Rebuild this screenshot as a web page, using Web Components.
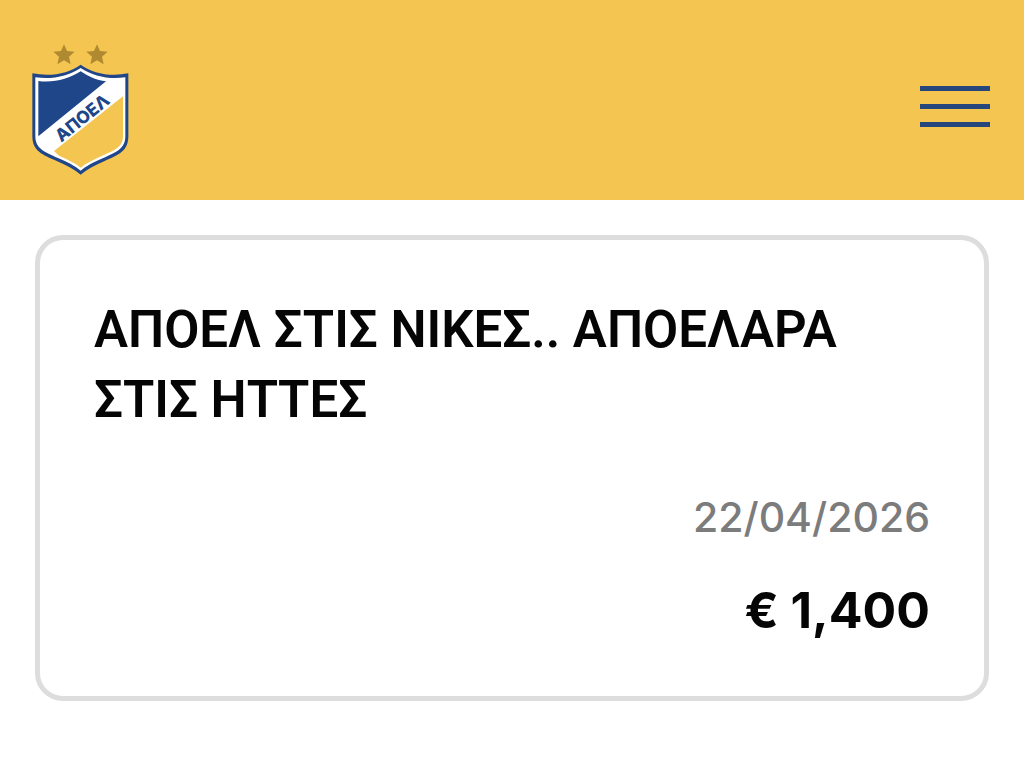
<!DOCTYPE html>
<html lang="el">
<head>
<meta charset="utf-8">
<meta name="viewport" content="width=device-width, initial-scale=1">
<title>ΑΠΟΕΛ</title>
<style>
    body {
        margin: 0;
        background: #fff;
        color: #050505;
        font-family: Inter, "Noto Sans", sans-serif;
    }
</style>
</head>
<body>
<site-header>
    <club-crest></club-crest>
    <menu-button slot="actions"></menu-button>
</site-header>
<main>
    <donation-card>
        <span slot="title">ΑΠΟΕΛ ΣΤΙΣ ΝΙΚΕΣ.. ΑΠΟΕΛΑΡΑ ΣΤΙΣ ΗΤΤΕΣ</span>
        <time slot="date" datetime="2026-04-22">22/04/2026</time>
        <span slot="amount">€ 1,400</span>
    </donation-card>
</main>

<script>
const define = (name, html) => {
    const template = document.createElement('template');
    template.innerHTML = html;

    window.customElements.define(name, class extends HTMLElement {
        constructor() {
            super();
            this.attachShadow({ mode: "open" });
            this.shadowRoot.appendChild(template.content.cloneNode(true));
        }
    });
};

define('site-header', `
<style>
    :host {
        display: block;
        background: #f4c551;
    }

    header {
        display: flex;
        align-items: center;
        justify-content: space-between;
        box-sizing: border-box;
        min-height: 200px;
        padding: 12px 34px 0 32px;
    }
</style>
<header>
    <slot></slot>
    <slot name="actions"></slot>
</header>`);

define('club-crest', `
<style>
    :host {
        display: block;
    }

    a, svg {
        display: block;
    }

    svg {
        margin-top: 6px;
    }

    text {
        font: 800 52px Inter, "Noto Sans", sans-serif;
        fill: #20468a;
    }
</style>
<a href="#" aria-label="ΑΠΟΕΛ">
    <svg width="97" height="131" viewBox="36 25 291 393">
        <g fill="#b08a30">
            <path d="M132 26l9 20 23 2-17 15 5 23-20-12-20 12 5-23-17-15 23-2z"/>
            <path d="M231 26l9 20 23 2-17 15 5 23-20-12-20 12 5-23-17-15 23-2z"/>
        </g>
        <path fill="#20468a" d="M182 87C146 113 94 124 37 113V302C37 346 68 358 110 376C140 389 164 401 182 417C200 401 224 389 254 376C296 358 325 346 325 302V113C270 124 218 113 182 87z"/>
        <path fill="#fff" d="M182 97C145 122 96 132 46 125V302C46 339 74 350 114 367C142 379 166 391 182 405C198 391 222 379 250 367C290 350 316 339 316 302V125C268 132 219 122 182 97z"/>
        <path fill="#20468a" d="M182 107C146 130 101 142 55 136V302L258 137C229 134 204 122 182 107z"/>
        <path fill="#f4c551" d="M309 182V302C309 334 286 343 247 360C219 372 197 383 182 396C167 383 145 372 117 360L102 346z"/>
        <text x="124" y="321" transform="rotate(-39 124 321)">ΑΠΟΕΛ</text>
    </svg>
</a>`);

define('menu-button', `
<style>
    :host {
        display: block;
    }

    button {
        display: flex;
        flex-direction: column;
        gap: 13px;
        width: 70px;
        padding: 0;
        border: none;
        background: none;
        cursor: pointer;
    }

    span {
        height: 5px;
        width: 100%;
        background: #26477c;
    }
</style>
<button type="button" aria-label="Menu">
    <span></span>
    <span></span>
    <span></span>
</button>`);

define('donation-card', `
<style>
    :host {
        display: block;
        margin: 35px;
        padding: 55px 54px 52px;
        border: 5px solid #ddd;
        border-radius: 28px;
    }

    h2 {
        margin: 0;
        font-family: Roboto, "Noto Sans", sans-serif;
        font-size: 51px;
        font-weight: 600;
        line-height: 70px;
    }

    p {
        margin: 0;
        text-align: right;
    }

    .date {
        margin-top: 53px;
        color: #7c7c7c;
        font-size: 41px;
        font-weight: 500;
        line-height: 58px;
    }

    .amount {
        margin-top: 30px;
        font-size: 50px;
        font-weight: 700;
        line-height: 68px;
    }
</style>
<h2><slot name="title"></slot></h2>
<p class="date"><slot name="date"></slot></p>
<p class="amount"><slot name="amount"></slot></p>`);
</script>
</body>
</html>
